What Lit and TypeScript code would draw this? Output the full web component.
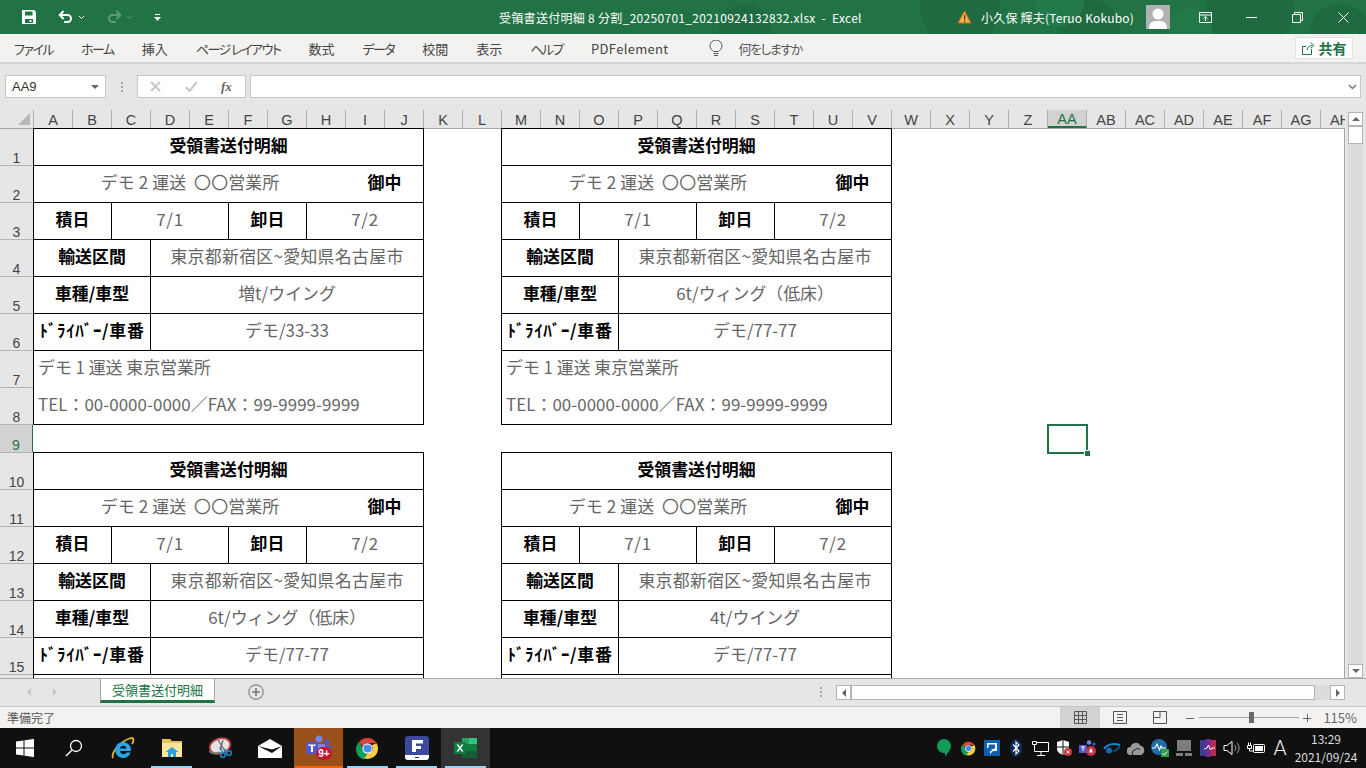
import {LitElement, css, html, svg} from "lit";
import {customElement, property} from "lit/decorators.js";

interface Receipt {
  vehicle: string;
  driver: string;
  // lower cards run off the bottom of the sheet, their note rows never show
  clipped?: boolean;
}

const COLUMNS = [..."ABCDEFGHIJKLMNOPQRSTUVWXYZ", ..."ABCDEFGH".split("").map((c) => "A" + c)];
const ROWS = Array.from({length: 16}, (_, i) => i + 1);

const RECEIPTS: Receipt[] = [
  {vehicle: "増t/ウイング", driver: "デモ/33-33"},
  {vehicle: "6t/ウィング（低床）", driver: "デモ/77-77"},
  {vehicle: "6t/ウィング（低床）", driver: "デモ/77-77", clipped: true},
  {vehicle: "4t/ウイング", driver: "デモ/77-77", clipped: true},
];

const TABS = ["ファイル", "ホーム", "挿入", "ページ レイアウト", "数式", "データ", "校閲", "表示", "ヘルプ", "PDFelement"];

@customElement("receipt-card")
export class ReceiptCard extends LitElement {
  @property({attribute: false}) receipt: Receipt = RECEIPTS[0];

  static styles = css`
    :host {
      display: grid;
      grid-template-columns: repeat(10, 39px);
      grid-auto-rows: 37px;
      width: 391px;
      border-top: 1px solid #000;
      border-left: 1px solid #000;
      box-sizing: border-box;
      font-family: "Noto Sans CJK JP", "Noto Sans", sans-serif;
      font-size: 16.9px;
      color: #666;
    }
    .c {
      display: flex;
      align-items: center;
      justify-content: center;
      padding-bottom: 6px;
      box-sizing: border-box;
      border-right: 1px solid #000;
      border-bottom: 1px solid #000;
      white-space: nowrap;
      overflow: hidden;
    }
    .b {
      font-weight: 700;
      color: #000;
    }
    .title {
      grid-column: span 10;
    }
    .to {
      grid-column: span 8;
      border-right: none;
      letter-spacing: 0.15px;
    }
    .s2 {
      grid-column: span 2;
    }
    .s3 {
      grid-column: span 3;
    }
    .s7 {
      grid-column: span 7;
    }
    .note {
      grid-column: span 10;
      justify-content: flex-start;
      padding-left: 4px;
    }
    .upper {
      border-bottom: none;
    }
    .wide {
      letter-spacing: 0.7px;
    }
    .route {
      letter-spacing: 0.3px;
    }
    .digits {
      letter-spacing: 0.07px;
    }
  `;

  render() {
    const {vehicle, driver, clipped} = this.receipt;
    return html`
      <div class="c b title">受領書送付明細</div>
      <div class="c to">デモ 2 運送&nbsp;&nbsp;〇〇営業所</div>
      <div class="c b s2">御中</div>
      <div class="c b s2">積日</div>
      <div class="c s3 wide">7/1</div>
      <div class="c b s2">卸日</div>
      <div class="c s3 wide">7/2</div>
      <div class="c b s3">輸送区間</div>
      <div class="c s7 route">東京都新宿区~愛知県名古屋市</div>
      <div class="c b s3">車種/車型</div>
      <div class="c s7">${vehicle}</div>
      <div class="c b s3 wide">ﾄﾞﾗｲﾊﾞｰ/車番</div>
      <div class="c s7">${driver}</div>
      <div class="c note upper">${clipped ? "" : "デモ 1 運送 東京営業所"}</div>
      <div class="c note digits">${clipped ? "" : "TEL：00-0000-0000／FAX：99-9999-9999"}</div>
    `;
  }
}

const icon = (w: number, h: number, body: unknown) =>
  html`<svg width=${w} height=${h} viewBox="0 0 ${w} ${h}">${body}</svg>`;

const chromeLogo = (s: number) =>
  html`<svg width=${s} height=${s} viewBox="0 0 24 24">
    <path fill="#db4437" d="M12 1a11 11 0 0 1 9.500 5.500H12a5.500 5.500 0 0 0-5.200 3.700L3.200 5A11 11 0 0 1 12 1z" />
    <path fill="#0f9d58" d="M3.200 5l4 6.900A5 5 0 0 0 12 17.500l-3.600 6A11 11 0 0 1 3.200 5z" />
    <path fill="#ffcd40" d="M21.500 6.500A11 11 0 0 1 12 23l-3.600-.5 4-5.500a5 5 0 0 0 3.800-8.500z" />
    <circle cx="12" cy="12" r="5.400" fill="#fff" />
    <circle cx="12" cy="12" r="4.300" fill="#4a8af4" />
  </svg>`;

const TASKBAR = [
  {w: 49, bar: "", icon: icon(18, 18, svg`<path fill="#fff" d="M0 2.500 7.500 1.400V8.500H0zM8.500 1.300 18 0V8.500H8.500zM0 9.500H7.500V16.600L0 15.500zM8.500 9.500H18V18L8.500 16.700z"/>`)},
  {w: 49, bar: "", icon: icon(18, 18, svg`<circle cx="11" cy="7" r="5.500" fill="none" stroke="#fff" stroke-width="1.300"/><path d="M7 11 1 17" stroke="#fff" stroke-width="1.500"/>`)},
  {w: 49, bar: "", icon: icon(24, 24, svg`<path fill="none" stroke="#e8b923" stroke-width="1.800" d="M2 22C0 18 7 6 20 2c3-.5 3 3 1 6"/><path fill="#2aa7e8" d="M12 6a8 8 0 0 1 8 9h-11a3.500 3.500 0 0 0 6.500 1.500h4.200A8 8 0 1 1 12 6zM9 12.500h6.500A3.300 3.300 0 0 0 9 12.500z"/>`)},
  {w: 49, bar: "#99d1f7", icon: icon(22, 20, svg`<path fill="#e8c25a" d="M1 1h8l2 2h10v16H1z"/><path fill="#fbe49b" d="M1 5h20v14H1z"/><path fill="#2aa1e0" d="M7 19v-5H4.500L11 9l6.500 5H15v5h-3v-3h-2v3z"/>`)},
  {w: 49, bar: "", icon: icon(24, 22, svg`<ellipse cx="11" cy="9" rx="10.500" ry="7.500" transform="rotate(-18 11 9)" fill="#e9e3e0" stroke="#b5403e" stroke-width="1.800"/><path d="M0 14c3 3 8 3 11 1" stroke="#777" stroke-width="2" fill="none"/><path d="M9 3 16 14M14 3l-3 10" stroke="#666" stroke-width="1.300"/><circle cx="14" cy="18" r="2.300" fill="none" stroke="#1a86c8" stroke-width="1.600"/><circle cx="20" cy="16" r="2.300" fill="none" stroke="#1a86c8" stroke-width="1.600"/><path d="M11 10l3 6M15 12l4 3" stroke="#1a86c8" stroke-width="1.500"/>`)},
  {w: 49, bar: "", icon: icon(24, 19, svg`<path fill="#fff" d="M12 0 24 7V19H0V7z"/><path fill="#111" d="M0 7 14 14 24 7 14 10.500z"/>`)},
  {w: 49, bar: "#f7630c", bg: "#9a501b", icon: icon(28, 26, svg`<circle cx="14" cy="4" r="3.500" fill="#7b83eb"/><circle cx="22" cy="7" r="2.600" fill="#5059c9"/><path fill="#5059c9" d="M17 10h9v8h-9z"/><path fill="#7b83eb" d="M9 9h11v10H9z"/><rect x="1" y="7" width="12" height="12" rx="1" fill="#5558c8"/><path fill="#fff" d="M3.500 9.500h7v1.600H8V17H6v-5.900H3.500z"/><rect x="11" y="12" width="16" height="13" rx="6.500" fill="#c4142f"/><text x="19" y="22" text-anchor="middle" font-family="Liberation Sans" font-weight="700" font-size="10" fill="#fff">9+</text>`)},
  {w: 49, bar: "#99d1f7", icon: chromeLogo(23)},
  {w: 49, bar: "#99d1f7", icon: icon(24, 24, svg`<rect width="24" height="24" rx="3" fill="#3b4a9e"/><path fill="#fff" d="M7 4h11v3.500h-7v2.500h5v3h-5v3H7z"/><path fill="#fff" d="M0 19h24v2a3 3 0 0 1-3 3H3a3 3 0 0 1-3-3z"/><path fill="#333" d="M10 21h4v1h-4z"/>`)},
  {w: 49, bar: "#99d1f7", bg: "#333333", icon: icon(24, 22, svg`<path fill="#21a366" d="M8 1h15v6H8z"/><path fill="#33c481" d="M15 1h8v6h-8z"/><path fill="#107c41" d="M8 7h15v7H8z"/><path fill="#185c37" d="M8 14h15v7H8z"/><rect x="0" y="5" width="12" height="12" fill="#0f7b41"/><path fill="#fff" d="M2.500 7.500h2l1.500 2.500 1.500-2.500h2L7 11l2.500 3.500h-2L6 12l-1.500 2.500h-2L5 11z"/>`)},
];

const TRAY = [
  icon(14, 18, svg`<path fill="#0f9d58" d="M7 0a7 7 0 0 1 7 7c0 4-3.500 7-6 11V14a7 7 0 0 1-1 0A7 7 0 0 1 7 0z"/>`),
  chromeLogo(15),
  icon(16, 16, svg`<rect width="16" height="16" fill="#0f5fb5"/><path fill="#fff" d="M3 3h10v8H9l-3 3v-3h1.500V9.500L11 8.500V4.500H4.500V8H3z"/>`),
  icon(12, 18, svg`<ellipse cx="6" cy="9" rx="6" ry="9" fill="#0a2a5a"/><path fill="none" stroke="#fff" stroke-width="1.200" d="M3 5.500 9 12l-3 3V3l3 3-6 6.500"/>`),
  icon(18, 16, svg`<path fill="none" stroke="#fff" d="M1.500 1.500h4v3h-4zM3.500 4.500v7M5.500 2.500h12v9H3.500M10 11.500v3.500M6 15.500h8"/>`),
  icon(16, 16, svg`<path fill="#fff" d="M1 2 7 0l6 2v7c0 3-3 5-6 6-3-1-6-3-6-6z"/><path stroke="#111" d="M7 0v15M1 7h12"/><circle cx="12" cy="12" r="4" fill="#d13438"/><path stroke="#fff" d="M10.500 10.500l3 3m0-3-3 3"/>`),
  icon(18, 16, svg`<circle cx="10" cy="2.500" r="2.200" fill="#7b83eb"/><circle cx="15" cy="4" r="1.600" fill="#5059c9"/><rect x="0" y="5" width="8" height="8" fill="#5558c8"/><path fill="#fff" d="M2 6.500h4v1H4.500V11h-1V7.500H2z"/><circle cx="12" cy="11" r="5" fill="#c4314b"/><path fill="#fff" d="M10 12.500c.7-.5.5-4 2-4s1.300 3.500 2 4z"/>`),
  icon(18, 12, svg`<path fill="none" stroke="#1488cc" stroke-width="2" d="M1 7c3-5 10-6 16-4"/><circle cx="6" cy="8.500" r="3" fill="#0f6ca8"/><path fill="none" stroke="#0a5a90" stroke-width="1.500" d="M10 9c3 0 5-2 7-5"/>`),
  icon(18, 13, svg`<path fill="#9a9a9a" d="M4 13a4 4 0 0 1-.5-8A5.500 5.500 0 0 1 13.500 3.500 5 5 0 0 1 14 13z"/><path fill="none" stroke="#111" d="M6 13a3 3 0 0 1 2-5c1-2 4-2 5 0"/>`),
  icon(18, 18, svg`<circle cx="8" cy="8" r="8" fill="#1f6cab"/><path fill="none" stroke="#fff" stroke-width="1.100" d="M1 9h3l2-4 2.500 6L10 7l1 2h4"/><rect x="10" y="10" width="8" height="8" fill="#2e9e3e"/><path fill="none" stroke="#fff" d="M11.500 14l1.700 2 3-3.500"/>`),
  icon(16, 16, svg`<rect x="1" y="0" width="14" height="11" fill="#7d7d7d"/><path fill="#7d7d7d" d="M0 13h7v3H0zM9 13h7v3H9z"/>`),
  icon(16, 18, svg`<path fill="#3c3c96" d="M0 1h6v16H0z"/><path fill="#7c2a8a" d="M6 0h5v18H6z"/><path fill="#b92a52" d="M11 1h5v16h-5z"/><path fill="none" stroke="#fff" d="M4 10l3-1 1.500-3 2 5 1.500-2h3"/>`),
  icon(18, 16, svg`<path fill="none" stroke="#fff" d="M1 5.500h3l5-4v13l-5-4H1z"/><path fill="none" stroke="#aaa" d="M11.500 5a4 4 0 0 1 0 6M14 3a7 7 0 0 1 0 10"/>`),
  icon(18, 14, svg`<path fill="none" stroke="#fff" d="M.5 4.500h4v3h-4zM1.500 1.500v3M3.500 1.500v3M2.500 7.500v2.500H7"/><rect x="6.500" y="3.500" width="11" height="8" rx="1" fill="none" stroke="#fff"/><path fill="#fff" d="M8 5h8v5H8z"/>`),
];

@customElement("app-root")
export class AppRoot extends LitElement {
  static styles = css`
    :host {
      display: flex;
      flex-direction: column;
      width: 1366px;
      height: 768px;
      overflow: hidden;
      font-family: "Noto Sans CJK JP", "Noto Sans", sans-serif;
      font-size: 12px;
      color: #444;
      background: #e6e6e6;
    }
    svg {
      display: block;
      flex: none;
    }

    /* title bar */
    .titlebar {
      position: relative;
      flex: none;
      display: flex;
      align-items: center;
      height: 34px;
      background: #217346;
      color: #fff;
      overflow: hidden;
    }
    .pattern {
      position: absolute;
      inset: 0;
    }
    .qat {
      position: relative;
      display: flex;
      align-items: center;
      gap: 4px;
      width: 499px;
      padding-left: 21px;
      box-sizing: border-box;
    }
    .qat .sp {
      width: 13px;
    }
    .docname {
      position: relative;
      width: 458px;
      white-space: pre;
      letter-spacing: 0.3px;
    }
    .warn {
      position: relative;
      width: 24px;
    }
    .user {
      position: relative;
      width: 165px;
      white-space: nowrap;
      letter-spacing: 0.2px;
    }
    .avatar {
      position: relative;
      width: 24px;
      height: 24px;
      background: #b1b1b1;
      overflow: hidden;
    }
    .winbtns {
      position: relative;
      display: flex;
      margin-left: auto;
    }
    .winbtn {
      width: 46px;
      height: 34px;
      display: flex;
      align-items: center;
      justify-content: center;
    }

    /* ribbon tabs */
    .ribbon {
      flex: none;
      display: flex;
      align-items: center;
      gap: 28px;
      height: 30px;
      padding: 0 13px 0 14px;
      box-sizing: border-box;
      background: #f3f2f1;
      border-bottom: 2px solid #d6d6d6;
      white-space: nowrap;
      font-size: 13px;
      font-feature-settings: "palt";
    }
    .kana {
      letter-spacing: -1.5px;
    }
    .latin {
      letter-spacing: 0.3px;
    }
    .search {
      display: flex;
      align-items: center;
      gap: 15px;
      margin-left: 13px;
      color: #5a5a5a;
    }
    .share {
      display: flex;
      align-items: center;
      justify-content: center;
      gap: 4px;
      width: 58px;
      height: 22px;
      margin-left: auto;
      background: #fff;
      border: 1px solid #e1dfdd;
      border-radius: 2px;
      box-sizing: border-box;
      color: #217346;
      font-size: 14px;
      font-weight: 700;
    }

    /* name box and formula bar */
    .formula {
      flex: none;
      display: flex;
      align-items: flex-start;
      height: 46px;
      padding: 11px 5px 0;
      box-sizing: border-box;
    }
    .box {
      height: 23px;
      background: #fff;
      border: 1px solid #c6c6c6;
      box-sizing: border-box;
      display: flex;
      align-items: center;
    }
    .namebox {
      width: 101px;
      padding: 0 6px;
      justify-content: space-between;
      font-family: "Liberation Sans", sans-serif;
      font-size: 13px;
      color: #333;
    }
    .tri {
      width: 0;
      height: 0;
      border: 4px solid transparent;
      border-top: 4px solid #666;
      border-bottom: none;
    }
    .dots {
      width: 31px;
      height: 23px;
      display: flex;
      flex-direction: column;
      align-items: center;
      justify-content: center;
      gap: 2px;
    }
    .dots i {
      width: 2px;
      height: 2px;
      background: #a6a6a6;
    }
    .fx {
      width: 109px;
      margin-right: 4px;
      padding-left: 12px;
      gap: 24px;
    }
    .fx svg:nth-child(2) {
      margin-right: -1px;
    }
    .fxlabel {
      font-family: "Liberation Serif", serif;
      font-style: italic;
      font-weight: 700;
      font-size: 13px;
      color: #666;
    }
    .input {
      flex: 1;
      justify-content: flex-end;
      padding-right: 3px;
    }

    /* sheet */
    .sheet {
      flex: none;
      display: flex;
      height: 568px;
    }
    .grid {
      width: 1345px;
      display: flex;
      flex-direction: column;
      overflow: hidden;
    }
    .cols {
      flex: none;
      display: flex;
      height: 18px;
    }
    .corner {
      flex: none;
      position: relative;
      width: 34px;
      box-sizing: border-box;
      border-right: 1px solid #b0b0b0;
    }
    .corner::after {
      content: "";
      position: absolute;
      right: 3px;
      bottom: 3px;
      width: 12px;
      height: 12px;
      background: #b8b8b8;
      clip-path: polygon(100% 0, 100% 100%, 0 100%);
    }
    .col {
      flex: none;
      width: 39px;
      box-sizing: border-box;
      border-right: 1px solid #b0b0b0;
      text-align: center;
      line-height: 18px;
      padding-top: 1px;
      font-family: "Liberation Sans", sans-serif;
      font-size: 14.5px;
      color: #444;
      white-space: nowrap;
      overflow: hidden;
    }
    .col.on {
      background: #d2d2d2;
      border-bottom: 2px solid #217346;
      color: #217346;
      line-height: 16px;
    }
    .body {
      flex: 1;
      display: flex;
      min-height: 0;
    }
    .rows {
      flex: none;
      width: 34px;
      box-sizing: border-box;
      border-top: 1px solid #a6a6a6;
      border-right: 1px solid #a6a6a6;
    }
    .row {
      height: 37px;
      box-sizing: border-box;
      border-bottom: 1px solid #b4b4b4;
      display: flex;
      align-items: flex-end;
      justify-content: center;
      font-family: "Liberation Sans", sans-serif;
      font-size: 14px;
      line-height: 14px;
      color: #444;
    }
    .row.on {
      height: 28px;
      margin-right: -1px;
      background: #d2d2d2;
      border-right: 2px solid #217346;
      color: #217346;
    }
    .cells {
      position: relative;
      flex: 1;
      margin-left: -1px;
      background: #fff;
      border-top: 1px solid #a6a6a6;
      border-right: 1px solid #a6a6a6;
    }
    .canvas {
      display: grid;
      grid-template-columns: 391px 391px;
      column-gap: 77px;
      row-gap: 27px;
      margin-top: -1px;
    }
    .sel {
      position: absolute;
      left: 1014px;
      top: 295px;
      width: 41px;
      height: 30px;
      box-sizing: border-box;
      border: 2px solid #217346;
    }
    .sel::after {
      content: "";
      position: absolute;
      right: -4px;
      bottom: -4px;
      width: 5px;
      height: 5px;
      background: #217346;
      border: 1px solid #fff;
      border-width: 1px 0 0 1px;
    }

    /* vertical scrollbar */
    .vscroll {
      flex: none;
      display: flex;
      flex-direction: column;
      width: 15px;
      margin-left: 3px;
      padding-top: 2px;
      box-sizing: content-box;
    }
    .sbtn {
      flex: none;
      display: flex;
      align-items: center;
      justify-content: center;
      width: 15px;
      height: 14px;
      background: #fff;
      border: 1px solid #b4b4b4;
      box-sizing: border-box;
    }
    .up {
      width: 0;
      height: 0;
      border: 4px solid transparent;
      border-bottom: 4px solid #666;
      border-top: none;
    }
    .down {
      width: 0;
      height: 0;
      border: 4px solid transparent;
      border-top: 4px solid #666;
      border-bottom: none;
    }
    .left {
      width: 0;
      height: 0;
      border: 4px solid transparent;
      border-right: 4px solid #666;
      border-left: none;
    }
    .right {
      width: 0;
      height: 0;
      border: 4px solid transparent;
      border-left: 4px solid #666;
      border-right: none;
    }
    .vtrack {
      flex: 1;
      background: #dcdcdc;
    }
    .vthumb {
      height: 18px;
      background: #fff;
      border: 1px solid #b4b4b4;
      box-sizing: border-box;
    }

    /* sheet tabs */
    .tabs {
      flex: none;
      display: flex;
      align-items: flex-start;
      height: 29px;
      box-sizing: border-box;
      border-top: 1px solid #a6a6a6;
      border-bottom: 1px solid #c6c6c6;
    }
    .navs {
      width: 100px;
      display: flex;
      gap: 22px;
      padding: 9px 0 0 27px;
      box-sizing: border-box;
    }
    .navs i {
      width: 0;
      height: 0;
      border: 4px solid transparent;
      border-right: none;
      border-left: 4px solid #c6c6c6;
    }
    .navs i:first-child {
      border-left: none;
      border-right: 4px solid #c6c6c6;
    }
    .tab {
      width: 115px;
      height: 25px;
      margin-top: -1px;
      display: flex;
      align-items: center;
      justify-content: center;
      background: #fff;
      border: 1px solid #a6a6a6;
      border-top-color: #a6a6a6;
      border-bottom: 3px solid #217346;
      box-sizing: border-box;
      color: #217346;
      font-size: 13px;
    }
    .add {
      margin: 5px 0 0 33px;
    }
    .hdots {
      display: flex;
      flex-direction: column;
      gap: 2px;
      margin: 8px 14px 0 556px;
    }
    .hdots i {
      width: 2px;
      height: 2px;
      background: #a6a6a6;
    }
    .hscroll {
      display: flex;
      width: 509px;
      height: 15px;
      margin-top: 6px;
    }
    .hscroll .sbtn {
      width: 15px;
      height: 15px;
    }
    .hthumb {
      width: 464px;
      background: #fff;
      border: 1px solid #b4b4b4;
      box-sizing: border-box;
    }
    .htrack {
      flex: 1;
      background: #dcdcdc;
    }

    /* status bar */
    .status {
      flex: none;
      display: flex;
      align-items: center;
      height: 21px;
      padding: 0 9px 0 7px;
      box-sizing: border-box;
      background: #f3f2f1;
      color: #555;
    }
    .views {
      display: flex;
      margin-left: auto;
    }
    .view {
      width: 40px;
      height: 21px;
      display: flex;
      align-items: center;
      justify-content: center;
    }
    .view.on {
      background: #d2d2d2;
    }
    .zoom {
      display: flex;
      align-items: center;
      margin-left: 6px;
    }
    .slider {
      position: relative;
      width: 100px;
      height: 1px;
      margin: 0 4px 0 5px;
      background: #a6a6a6;
    }
    .knob {
      position: absolute;
      left: 50px;
      top: -5px;
      width: 5px;
      height: 11px;
      background: #6a6a6a;
    }
    .pct {
      width: 46px;
      text-align: right;
      font-size: 13px;
      color: #666;
    }

    /* taskbar */
    .taskbar {
      flex: none;
      display: flex;
      height: 40px;
      background: #101010;
    }
    .task {
      position: relative;
      display: flex;
      align-items: center;
      justify-content: center;
      height: 40px;
    }
    .task b {
      position: absolute;
      left: 4px;
      right: 4px;
      bottom: 0;
      height: 2px;
    }
    .task b.full {
      left: 1px;
      right: 0;
    }
    .tray {
      display: flex;
      margin-left: auto;
    }
    .tray span {
      width: 24px;
      height: 40px;
      display: flex;
      align-items: center;
      justify-content: center;
    }
    .ime {
      font-family: Roboto, "Liberation Sans", sans-serif;
      font-size: 21px;
      font-weight: 300;
      color: #eee;
    }
    .clock {
      width: 68px;
      margin-right: 6px;
      text-align: center;
      line-height: 18px;
      padding-top: 2px;
      color: #ddd;
    }
  `;

  renderTitlebar() {
    return html`
      <div class="titlebar">
        <svg class="pattern" width="1366" height="34">
          <g fill="#1f6a41">
            <circle cx="745" cy="30" r="26" />
            <circle cx="960" cy="6" r="40" />
            <circle cx="1090" cy="30" r="30" />
            <circle cx="1250" cy="8" r="44" />
            <circle cx="1340" cy="34" r="30" />
          </g>
          <g fill="#227a4a">
            <circle cx="1060" cy="2" r="24" />
            <circle cx="1190" cy="30" r="22" />
          </g>
        </svg>
        <div class="qat">
          ${icon(16, 16, svg`<path fill="#fff" fill-rule="evenodd" d="M1 1h12l2 2v12H1zM4 2.500v4h7.500v-4zM4 10v4h8v-4zM8.500 11h2v2h-2z"/>`)}
          <span class="sp"></span>
          ${icon(16, 16, svg`<path fill="none" stroke="#fff" stroke-width="2" d="M2 6h7.500a3.500 3.500 0 0 1 0 7H6M5.500 2 1.800 6l3.700 4"/>`)}
          ${icon(7, 5, svg`<path fill="none" stroke="#fff" d="M1 1l2.500 2.500L6 1"/>`)}
          <span class="sp"></span>
          ${icon(16, 16, svg`<path fill="none" stroke="#5d9a79" stroke-width="2" d="M14 6H6.500a3.500 3.500 0 0 0 0 7H10M10.500 2l3.700 4-3.700 4"/>`)}
          ${icon(7, 5, svg`<path fill="none" stroke="#5d9a79" d="M1 1l2.500 2.500L6 1"/>`)}
          <span class="sp"></span>
          ${icon(7, 7, svg`<path fill="#fff" d="M1 0h5v1H1zM0 3h7L3.500 7z"/>`)}
        </div>
        <div class="docname">受領書送付明細 8 分割_20250701_20210924132832.xlsx  -  Excel</div>
        <div class="warn">
          ${icon(15, 14, svg`<path fill="#f5b041" stroke="#c66a1e" d="M7.500 1 14 13H1z"/><path fill="#333" d="M7 5h1.200v4.500H7zM7 10.500h1.200V12H7z"/>`)}
        </div>
        <div class="user">小久保 輝夫(Teruo Kokubo)</div>
        <div class="avatar">
          ${icon(24, 24, svg`<circle cx="12" cy="9" r="5.500" fill="#fff"/><path fill="#fff" d="M3 24c0-7 3-8 9-8s9 1 9 8z"/>`)}
        </div>
        <div class="winbtns">
          <div class="winbtn">
            ${icon(13, 11, svg`<path fill="none" stroke="#fff" d="M.5.500h12v10H.5zM.5 3h12M6.500 9V4.500M4.500 6.500l2-2 2 2"/>`)}
          </div>
          <div class="winbtn">${icon(11, 1, svg`<path stroke="#fff" d="M0 .5h11"/>`)}</div>
          <div class="winbtn">
            ${icon(11, 11, svg`<path fill="none" stroke="#fff" d="M.5 2.500h8v8h-8zM2.500 2.500v-2h8v8h-2"/>`)}
          </div>
          <div class="winbtn">
            ${icon(11, 11, svg`<path stroke="#fff" d="M.5.500l10 10m0-10-10 10"/>`)}
          </div>
        </div>
      </div>
    `;
  }

  renderRibbon() {
    const tabClass = (t: string) => (/[ァ-ヶ]/.test(t) ? "kana" : /[a-z]/.test(t) ? "latin" : "");
    return html`
      <div class="ribbon">
        ${TABS.map((t) => html`<span class=${tabClass(t)}>${t}</span>`)}
        <div class="search">
          ${icon(14, 17, svg`<path fill="none" stroke="#555" d="M4.500 11.500C3 10 1 8.500 1 6a6 6 0 0 1 12 0c0 2.500-2 4-3.500 5.500z"/><path stroke="#555" d="M4.500 13.500h5M5 15.500h4"/>`)}
          <span class="kana">何をしますか</span>
        </div>
        <div class="share">
          ${icon(13, 13, svg`<path fill="none" stroke="#217346" d="M9.500 7v5.500H.5v-8H4M5 8c.5-3 2.500-4.500 5-4.500M8.500.8l3.500 2.700-3.500 2.700"/>`)}
          <span>共有</span>
        </div>
      </div>
    `;
  }

  renderFormula() {
    return html`
      <div class="formula">
        <div class="box namebox"><span>AA9</span><i class="tri"></i></div>
        <div class="dots"><i></i><i></i><i></i></div>
        <div class="box fx">
          ${icon(11, 11, svg`<path stroke="#c6c6c6" stroke-width="1.800" d="M1 1l9 9m0-9-9 9"/>`)}
          ${icon(13, 11, svg`<path fill="none" stroke="#c6c6c6" stroke-width="2" d="M1 6l3.500 4L12 1"/>`)}
          <span class="fxlabel">fx</span>
        </div>
        <div class="box input">
          ${icon(9, 6, svg`<path fill="none" stroke="#777" stroke-width="1.500" d="M1 1l3.500 3.500L8 1"/>`)}
        </div>
      </div>
    `;
  }

  renderSheet() {
    return html`
      <div class="sheet">
        <div class="grid">
          <div class="cols">
            <div class="corner"></div>
            ${COLUMNS.map((c) => html`<div class="col ${c === "AA" ? "on" : ""}">${c}</div>`)}
          </div>
          <div class="body">
            <div class="rows">
              ${ROWS.map((r) => html`<div class="row ${r === 9 ? "on" : ""}">${r < 16 ? r : ""}</div>`)}
            </div>
            <div class="cells">
              <div class="canvas">
                ${RECEIPTS.map((r) => html`<receipt-card .receipt=${r}></receipt-card>`)}
              </div>
              <div class="sel"></div>
            </div>
          </div>
        </div>
        <div class="vscroll">
          <div class="sbtn"><i class="up"></i></div>
          <div class="vtrack"><div class="vthumb"></div></div>
          <div class="sbtn"><i class="down"></i></div>
        </div>
      </div>
    `;
  }

  renderTabs() {
    return html`
      <div class="tabs">
        <div class="navs"><i></i><i></i></div>
        <div class="tab">受領書送付明細</div>
        <div class="add">
          ${icon(16, 16, svg`<circle cx="8" cy="8" r="7.200" fill="none" stroke="#888" stroke-width="1.200"/><path stroke="#777" stroke-width="1.600" d="M8 4v8M4 8h8"/>`)}
        </div>
        <div class="hdots"><i></i><i></i><i></i></div>
        <div class="hscroll">
          <div class="sbtn"><i class="left"></i></div>
          <div class="hthumb"></div>
          <div class="htrack"></div>
          <div class="sbtn"><i class="right"></i></div>
        </div>
      </div>
    `;
  }

  renderStatus() {
    return html`
      <div class="status">
        <span>準備完了</span>
        <div class="views">
          <div class="view on">
            ${icon(13, 13, svg`<path fill="none" stroke="#555" d="M.5.500h12v12H.5zM4.500.5v12M8.500.5v12M.5 4.500h12M.5 8.500h12"/>`)}
          </div>
          <div class="view">
            ${icon(14, 13, svg`<path fill="none" stroke="#555" d="M.5.500h13v12H.5zM4 3.500h6M4 6.500h6M4 9.500h6"/>`)}
          </div>
          <div class="view">
            ${icon(14, 13, svg`<path fill="none" stroke="#555" d="M.5.500h13v12H.5zM.5 6.500h6.500V.5"/>`)}
          </div>
        </div>
        <div class="zoom">
          ${icon(8, 8, svg`<path stroke="#666" d="M0 4.500h8"/>`)}
          <div class="slider"><div class="knob"></div></div>
          ${icon(8, 8, svg`<path stroke="#666" d="M0 4.500h8M4.500 0v8"/>`)}
          <div class="pct">115%</div>
        </div>
      </div>
    `;
  }

  renderTaskbar() {
    return html`
      <div class="taskbar">
        ${TASKBAR.map(
          (t) => html`
            <div class="task" style="width:${t.w}px;background:${t.bg ?? "transparent"}">
              ${t.icon}
              ${t.bar ? html`<b class=${t.bg === "#9a501b" ? "full" : ""} style="background:${t.bar}"></b>` : ""}
            </div>
          `
        )}
        <div class="tray">
          ${TRAY.map((i) => html`<span>${i}</span>`)}
          <span class="ime">A</span>
        </div>
        <div class="clock">13:29<br />2021/09/24</div>
      </div>
    `;
  }

  render() {
    return html`
      ${this.renderTitlebar()} ${this.renderRibbon()} ${this.renderFormula()} ${this.renderSheet()}
      ${this.renderTabs()} ${this.renderStatus()} ${this.renderTaskbar()}
    `;
  }
}
